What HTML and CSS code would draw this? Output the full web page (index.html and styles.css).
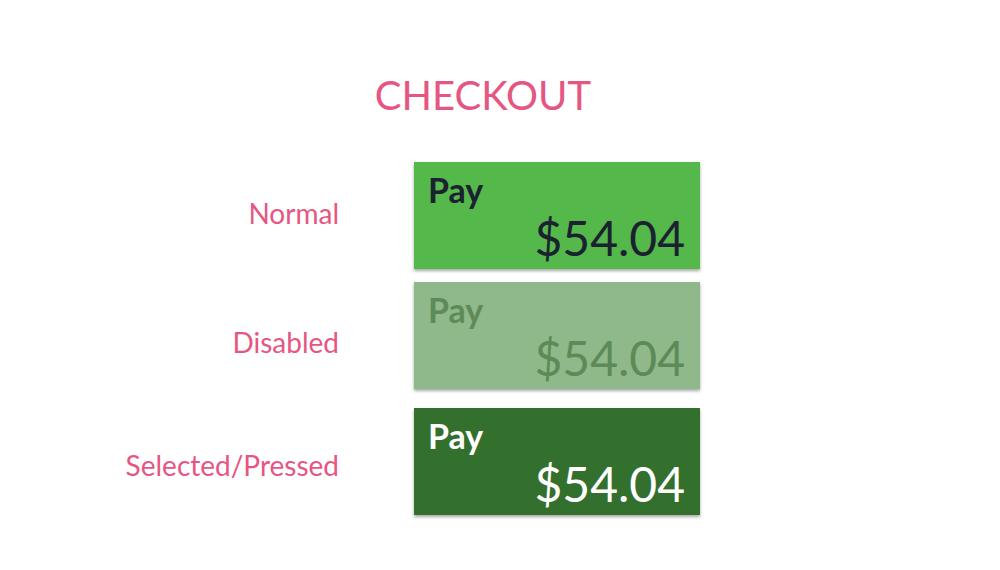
FILE: index.html
```html
<!DOCTYPE html>
<html>
<head>
<meta charset="utf-8">
<link rel="stylesheet" href="styles.css">
</head>
<body>
<div class="page">
  <h1 class="title">CHECKOUT</h1>
  <div class="states">
    <div class="row row-normal">
      <div class="label">Normal</div>
      <div class="pay pay-normal">
        <div class="pay-word">Pay</div>
        <div class="pay-amount">$54.04</div>
      </div>
    </div>
    <div class="row row-disabled">
      <div class="label">Disabled</div>
      <div class="pay pay-disabled">
        <div class="pay-word">Pay</div>
        <div class="pay-amount">$54.04</div>
      </div>
    </div>
    <div class="row row-pressed">
      <div class="label">Selected/Pressed</div>
      <div class="pay pay-pressed">
        <div class="pay-word">Pay</div>
        <div class="pay-amount">$54.04</div>
      </div>
    </div>
  </div>
</div>
</body>
</html>
```
FILE: styles.css
```css
* { box-sizing: border-box; }
html, body { margin: 0; padding: 0; background: #ffffff; }
body { font-family: Lato, "Open Sans", sans-serif; }
.page {
  width: 1000px;
  height: 570px;
  padding-top: 75px;
}
.title {
  width: 966px;
  margin: 0;
  text-align: center;
  font-size: 40px;
  font-weight: 400;
  line-height: 1;
  color: #e65683;
}
.states {
  margin-top: 47px;
  display: flex;
  flex-direction: column;
}
.row {
  display: grid;
  grid-template-columns: 339px 286px;
  column-gap: 75px;
  align-items: start;
}
.row-disabled { margin-top: 13px; }
.row-pressed { margin-top: 19px; }
.label {
  text-align: right;
  font-size: 28px;
  line-height: 1;
  color: #e65683;
}
.row-normal .label { padding-top: 37px; }
.row-disabled .label { padding-top: 46px; }
.row-pressed .label { padding-top: 43px; }
.pay {
  height: 107px;
  padding: 12px 15px 7px 14px;
  display: flex;
  flex-direction: column;
  box-shadow: 0 2px 3px rgba(0, 0, 0, 0.35);
}
.pay-word {
  font-size: 34px;
  font-weight: 700;
  line-height: 1;
  margin-top: -1px;
}
.pay-amount {
  margin-top: 7px;
  font-size: 48px;
  font-weight: 400;
  line-height: 1;
  text-align: right;
}
.pay-normal { background: #54b84a; color: #1b2130; }
.pay-disabled { background: #8fb98a; color: #5d8a57; }
.pay-pressed { background: #336f2d; color: #ffffff; }
```
